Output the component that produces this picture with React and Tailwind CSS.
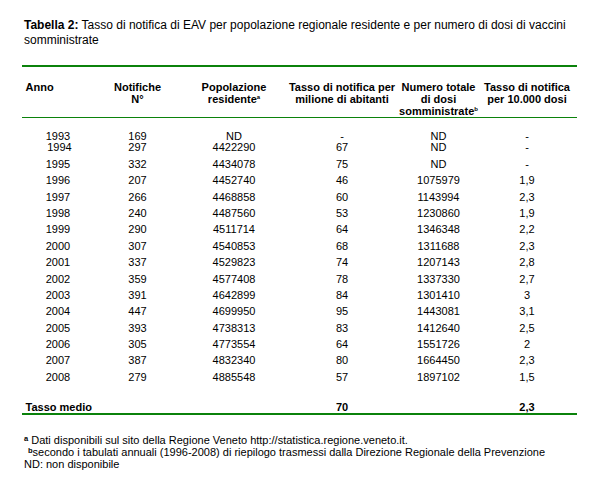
const rows = [
  ['1993', '169', 'ND', '-', 'ND', '-'],
  ['1994', '297', '4422290', '67', 'ND', '-'],
  ['1995', '332', '4434078', '75', 'ND', '-'],
  ['1996', '207', '4452740', '46', '1075979', '1,9'],
  ['1997', '266', '4468858', '60', '1143994', '2,3'],
  ['1998', '240', '4487560', '53', '1230860', '1,9'],
  ['1999', '290', '4511714', '64', '1346348', '2,2'],
  ['2000', '307', '4540853', '68', '1311688', '2,3'],
  ['2001', '337', '4529823', '74', '1207143', '2,8'],
  ['2002', '359', '4577408', '78', '1337330', '2,7'],
  ['2003', '391', '4642899', '84', '1301410', '3'],
  ['2004', '447', '4699950', '95', '1443081', '3,1'],
  ['2005', '393', '4738313', '83', '1412640', '2,5'],
  ['2006', '305', '4773554', '64', '1551726', '2'],
  ['2007', '387', '4832340', '80', '1664450', '2,3'],
  ['2008', '279', '4885548', '57', '1897102', '1,5'],
];

const cols = 'grid grid-cols-[72px_87px_106px_110px_83px_94px]';

export default function App() {
  return (
    <div className="min-h-[503px] w-[604px] bg-white pt-[18px] text-black font-['Liberation_Sans',Arial,sans-serif]">
      {/* caption */}
      <p className="pl-[24px] pr-[20px] text-[12px] leading-[15px]">
        <b>Tabella 2:</b> Tasso di notifica di EAV per popolazione regionale residente e per numero di dosi di vaccini somministrate
      </p>

      <div className="ml-[22px] mt-[16.5px] w-[555px]">
        <div className="h-[2px] bg-[#0b820b]" />

        {/* header */}
        <div className={`${cols} h-[36px] mt-[14px] text-[11px] font-bold leading-[12px]`}>
          <div className="pl-[3.5px]">Anno</div>
          <div className="text-center">Notifiche<br />N°</div>
          <div className="text-center">
            Popolazione<br />residente<span className="relative -top-[4px] text-[6px]">a</span>
          </div>
          <div className="text-center">Tasso di notifica per milione di abitanti</div>
          <div className="text-center">
            Numero totale<br />di dosi<br />somministrate<span className="relative -top-[4px] text-[6px]">b</span>
          </div>
          <div className="text-center">Tasso di notifica per 10.000 dosi</div>
        </div>
        <div className="h-[1.2px] bg-[#0b820b]" />

        {/* body */}
        <div className="mt-[10px] text-[11px] leading-[16.4px]">
          {rows.map((r, i) => (
            <div key={r[0]} className={`${cols} ${i === 0 ? 'h-[11.7px]' : 'h-[16.4px]'}`}>
              <div className={`text-center ${r[0] === '1994' ? 'pl-[3px]' : ''}`}>{r[0]}</div>
              <div className="text-center">{r[1]}</div>
              <div className="text-center">{r[2]}</div>
              <div className="text-center">{r[3]}</div>
              <div className="text-center">{r[4]}</div>
              <div className="text-center">{r[5]}</div>
            </div>
          ))}
        </div>

        {/* average */}
        <div className={`${cols} mt-[15.5px] h-[12px] text-[11px] font-bold leading-[12px]`}>
          <div className="col-span-3 pl-[3.5px]">Tasso medio</div>
          <div className="text-center">70</div>
          <div />
          <div className="text-center">2,3</div>
        </div>
        <div className="h-[2px] bg-[#0b820b]" />
      </div>

      {/* notes */}
      <div className="mt-[20px] pl-[24px] text-[11px] leading-[11.3px]">
        <div>
          <span className="relative -top-[3px] text-[7.5px] font-bold">a</span> Dati disponibili sul sito della Regione Veneto http://statistica.regione.veneto.it.
        </div>
        <div className="pl-[4px]">
          <span className="relative -top-[3px] text-[7.5px] font-bold">b</span>secondo i tabulati annuali (1996-2008) di riepilogo trasmessi dalla Direzione Regionale della Prevenzione
        </div>
        <div>ND: non disponibile</div>
      </div>
    </div>
  );
}
